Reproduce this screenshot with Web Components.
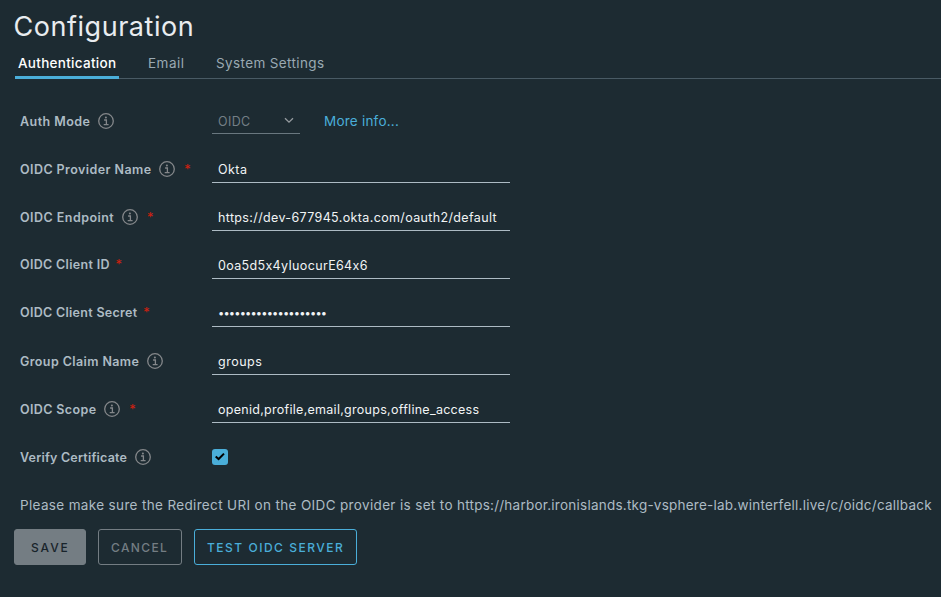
<!DOCTYPE html>
<html lang="en">
<head>
<meta charset="utf-8">
<title>Configuration</title>
<style>
html, body { margin: 0; height: 100%; }
body { background: #1d2b32; color: #adbbc4; font-family: Inter, "Open Sans", sans-serif; overflow: hidden; }
</style>
</head>
<body>
<config-page></config-page>
<script>
function define(name, html, setup) {
  const template = document.createElement('template');
  template.innerHTML = html;
  customElements.define(name, class extends HTMLElement {
    connectedCallback() {
      if (this.shadowRoot) return;
      const root = this.attachShadow({ mode: 'open' });
      root.append(template.content.cloneNode(true));
      if (setup) setup(this, root);
    }
  });
}

define('info-icon', `
<style>
:host { display: block; width: 16px; height: 16px; flex: none; color: #84878a; }
svg { display: block; }
</style>
<svg width="16" height="16" viewBox="0 0 16 16" fill="none" stroke="currentColor">
  <circle cx="8" cy="8" r="7.3" stroke-width="1.3"/>
  <circle cx="7.9" cy="4.5" r="1.05" fill="currentColor" stroke="none"/>
  <path d="M6.1 7H8.4V11.6M5.7 11.7H10.6" stroke-width="1.3"/>
</svg>`);

define('tab-item', `
<style>
:host { display: block; box-sizing: border-box; height: 31px; padding: 0 3px; font-size: 13.5px; line-height: 31px; white-space: nowrap; color: #9aa9b2; }
:host([active]) { color: #fff; font-weight: 500; box-shadow: inset 0 -3px #4aaed9; }
</style>
<slot></slot>`);

define('tab-bar', `
<style>
:host { display: flex; gap: 26px; height: 31px; margin: 5px 0 0 15px; box-shadow: inset 0 -1px #495a64; }
</style>
<slot></slot>`);

define('field-row', `
<style>
:host { display: grid; grid-template-columns: 192px 1fr; align-items: center; height: 48px; padding-left: 20px; font-size: 12.5px; }
.label { display: flex; align-items: center; font-weight: 600; line-height: 16px; white-space: nowrap; }
.text { padding-top: 2px; }
:host([raised]) .label { margin-top: -2px; }
info-icon { margin-left: 7.5px; }
.star { font: 400 13px/16px Inter, sans-serif; color: #d0200f; height: 16px; margin-left: 9.2px; }
:host([raised]) .star { margin-left: 5.7px; }
.content { display: flex; align-items: center; }
</style>
<div class="label"><span class="text"></span></div>
<div class="content"><slot></slot></div>`, (host, root) => {
  const label = root.querySelector('.label');
  const text = root.querySelector('.text');
  text.textContent = host.getAttribute('label');
  text.style.letterSpacing = host.getAttribute('track') + 'px';
  if (host.hasAttribute('info')) label.append(document.createElement('info-icon'));
  if (host.hasAttribute('required')) {
    const star = document.createElement('span');
    star.className = 'star';
    star.textContent = '*';
    label.append(star);
  }
});

define('text-field', `
<style>
:host { display: block; box-sizing: border-box; width: 298px; height: 28px; padding: 0 6px; border-bottom: 1px solid #adbbc4; color: #f1f4f5; line-height: 29px; white-space: nowrap; }
</style>
<slot></slot>`);

define('select-field', `
<style>
:host { display: flex; box-sizing: border-box; align-items: center; justify-content: space-between; width: 88px; height: 26px; padding: 2px 6px 0; border-bottom: 1px solid #69777f; color: #747f86; letter-spacing: .355px; }
svg { display: block; color: #969ca0; margin-top: -2px; }
</style>
<slot></slot>
<svg width="10" height="7" viewBox="0 0 10 7" fill="none" stroke="currentColor" stroke-width="1.3"><path d="M1 1.2 5 5.2 9 1.2"/></svg>`);

define('link-text', `
<style>
:host { display: block; margin-left: 24px; font-size: 13.5px; letter-spacing: .22px; color: #4aaed9; }
</style>
<slot></slot>`);

define('check-box', `
<style>
:host { display: block; width: 16px; height: 16px; border-radius: 3px; background: #4aaed9; }
svg { display: block; }
</style>
<svg width="16" height="16" viewBox="0 0 16 16" fill="none" stroke="#000" stroke-width="2"><path d="M3.7 7.4 6.6 10 12 4.6"/></svg>`);

define('action-button', `
<style>
:host { display: block; box-sizing: border-box; height: 36px; border: 1px solid currentColor; border-radius: 3px; padding-left: 12px; font-size: 12px; font-weight: 500; line-height: 35px; white-space: nowrap; color: #747d83; }
:host([kind=solid]) { background: #747d83; border-color: #747d83; color: #19242b; padding-left: 16px; }
:host([kind=primary]) { color: #4aaed9; }
</style>
<slot></slot>`);

define('config-page', `
<style>
:host { display: block; }
h1 { margin: 0; padding: 7px 0 0 13.5px; height: 43px; box-sizing: border-box; font-size: 27px; font-weight: 400; line-height: 40px; letter-spacing: .53px; color: #e9ecef; }
.form { padding-top: 18px; }
.note { margin: 0; height: 48px; padding-left: 20px; font-size: 13.5px; line-height: 48px; letter-spacing: .345px; white-space: nowrap; }
.url { letter-spacing: .236px; }
.actions { display: flex; gap: 12px; padding-left: 14px; }
</style>
<h1>Configuration</h1>
<tab-bar>
  <tab-item active style="width:104px;letter-spacing:.292px">Authentication</tab-item>
  <tab-item style="width:42px;letter-spacing:.5px">Email</tab-item>
  <tab-item style="letter-spacing:.378px">System Settings</tab-item>
</tab-bar>
<div class="form">
  <field-row label="Auth Mode" track=".446" info><select-field>OIDC</select-field><link-text>More info...</link-text></field-row>
  <field-row label="OIDC Provider Name" track=".43" info required><text-field style="letter-spacing:.477px">Okta</text-field></field-row>
  <field-row label="OIDC Endpoint" track=".46" info required><text-field style="letter-spacing:.362px">https://dev-677945.okta.com/oauth2/default</text-field></field-row>
  <field-row label="OIDC Client ID" track=".325" required raised><text-field style="letter-spacing:.34px">0oa5d5x4yIuocurE64x6</text-field></field-row>
  <field-row label="OIDC Client Secret" track=".3" required raised><text-field style="letter-spacing:-.83px;font-size:11.1px">••••••••••••••••••••</text-field></field-row>
  <field-row label="Group Claim Name" track=".398" info><text-field style="letter-spacing:.5px">groups</text-field></field-row>
  <field-row label="OIDC Scope" track=".38" info required><text-field style="letter-spacing:.28px">openid,profile,email,groups,offline_access</text-field></field-row>
  <field-row label="Verify Certificate" track=".21" info><check-box></check-box></field-row>
</div>
<p class="note">Please make sure the Redirect URI on the OIDC provider is set to <span class="url">https://harbor.ironislands.tkg-vsphere-lab.winterfell.live/c/oidc/callback</span></p>
<div class="actions">
  <action-button kind="solid" style="width:72px;letter-spacing:1.9px">SAVE</action-button>
  <action-button style="width:84px;letter-spacing:1.368px">CANCEL</action-button>
  <action-button kind="primary" style="width:163px;letter-spacing:1.515px">TEST OIDC SERVER</action-button>
</div>`);
</script>
</body>
</html>
